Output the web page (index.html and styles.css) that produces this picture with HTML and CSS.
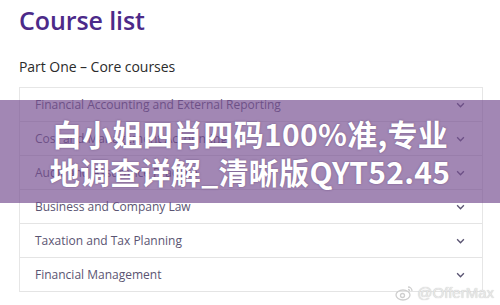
FILE: index.html
```html
<!DOCTYPE html>
<html>
<head>
<meta charset="utf-8">
<link rel="stylesheet" href="styles.css">
</head>
<body>
<div class="page">
  <h1 class="title">Course list</h1>
  <h2 class="subtitle">Part One – Core courses</h2>
  <ul class="list">
    <li class="row"><span>Financial Accounting and External Reporting</span><svg class="chev" viewBox="0 0 8 5"><path d="M1 1l3 3 3-3" /></svg></li>
    <li class="row"><span>Cost and Management Accounting</span><svg class="chev" viewBox="0 0 8 5"><path d="M1 1l3 3 3-3" /></svg></li>
    <li class="row"><span>Audit and Assurance Practice</span><svg class="chev" viewBox="0 0 8 5"><path d="M1 1l3 3 3-3" /></svg></li>
    <li class="row"><span>Business and Company Law</span><svg class="chev" viewBox="0 0 8 5"><path d="M1 1l3 3 3-3" /></svg></li>
    <li class="row"><span>Taxation and Tax Planning</span><svg class="chev" viewBox="0 0 8 5"><path d="M1 1l3 3 3-3" /></svg></li>
    <li class="row"><span>Financial Management</span><svg class="chev" viewBox="0 0 8 5"><path d="M1 1l3 3 3-3" /></svg></li>
  </ul>
</div>
<div class="banner">
  <p>白小姐四肖四码100%准,专业<br>地调查详解_清晰版QYT52.45</p>
</div>
<div class="mark"><svg class="weibo" viewBox="0 0 20 16"><ellipse cx="8" cy="10" rx="7" ry="5" /><circle cx="7.5" cy="10.5" r="2" /><path d="M13 2a4 4 0 0 1 4 4M13 4.5a1.6 1.6 0 0 1 1.6 1.6" /></svg><span>@OfferMax</span></div>
</body>
</html>
```
FILE: styles.css
```css
html, body {
  margin: 0;
  padding: 0;
  background: #fff;
}
body {
  width: 500px;
  height: 305px;
  overflow: hidden;
  position: relative;
  font-family: "Open Sans", "Noto Sans", sans-serif;
}
.page {
  padding: 3px 17px 0 19px;
}
.title {
  margin: 0;
  font-size: 25px;
  line-height: 35px;
  font-weight: 600;
  color: #4c2a89;
  letter-spacing: -0.1px;
}
.subtitle {
  margin: 19px 0 0 0;
  font-size: 14px;
  line-height: 20px;
  font-weight: 400;
  color: #2b2b2b;
  letter-spacing: -0.05px;
}
.list {
  list-style: none;
  margin: 10px 0 0 0;
  padding: 0;
  border: 1px solid #e6e6e6;
  border-bottom: none;
}
.row {
  display: flex;
  align-items: center;
  justify-content: space-between;
  height: 33px;
  padding: 0 17px 0 15px;
  border-bottom: 1px solid #e4e4e4;
  font-size: 12px;
  color: #5a5472;
}
.chev {
  width: 9px;
  height: 6px;
  fill: none;
  stroke: #5a5472;
  stroke-width: 1.2;
}
.banner {
  position: absolute;
  left: 0;
  top: 100px;
  width: 500px;
  height: 103px;
  background: rgba(118, 78, 145, 0.68);
  display: flex;
  align-items: center;
  justify-content: center;
}
.banner p {
  margin: 0;
  text-align: center;
  color: #fff;
  font-family: "Noto Sans CJK SC", "Noto Sans", sans-serif;
  font-weight: 700;
  font-size: 30px;
  line-height: 38px;
  letter-spacing: 0.3px;
  text-shadow: 0 0 2px rgba(60, 30, 80, 0.5);
}
.mark {
  position: absolute;
  right: 6px;
  bottom: 4px;
  display: flex;
  align-items: center;
  gap: 2px;
  color: #e8e8e8;
  font-family: "Liberation Sans", sans-serif;
  font-size: 15px;
  text-shadow: 0 0 1px #bbb;
}
.weibo {
  width: 20px;
  height: 16px;
  fill: none;
  stroke: #cfcfcf;
  stroke-width: 1.3;
}
```
